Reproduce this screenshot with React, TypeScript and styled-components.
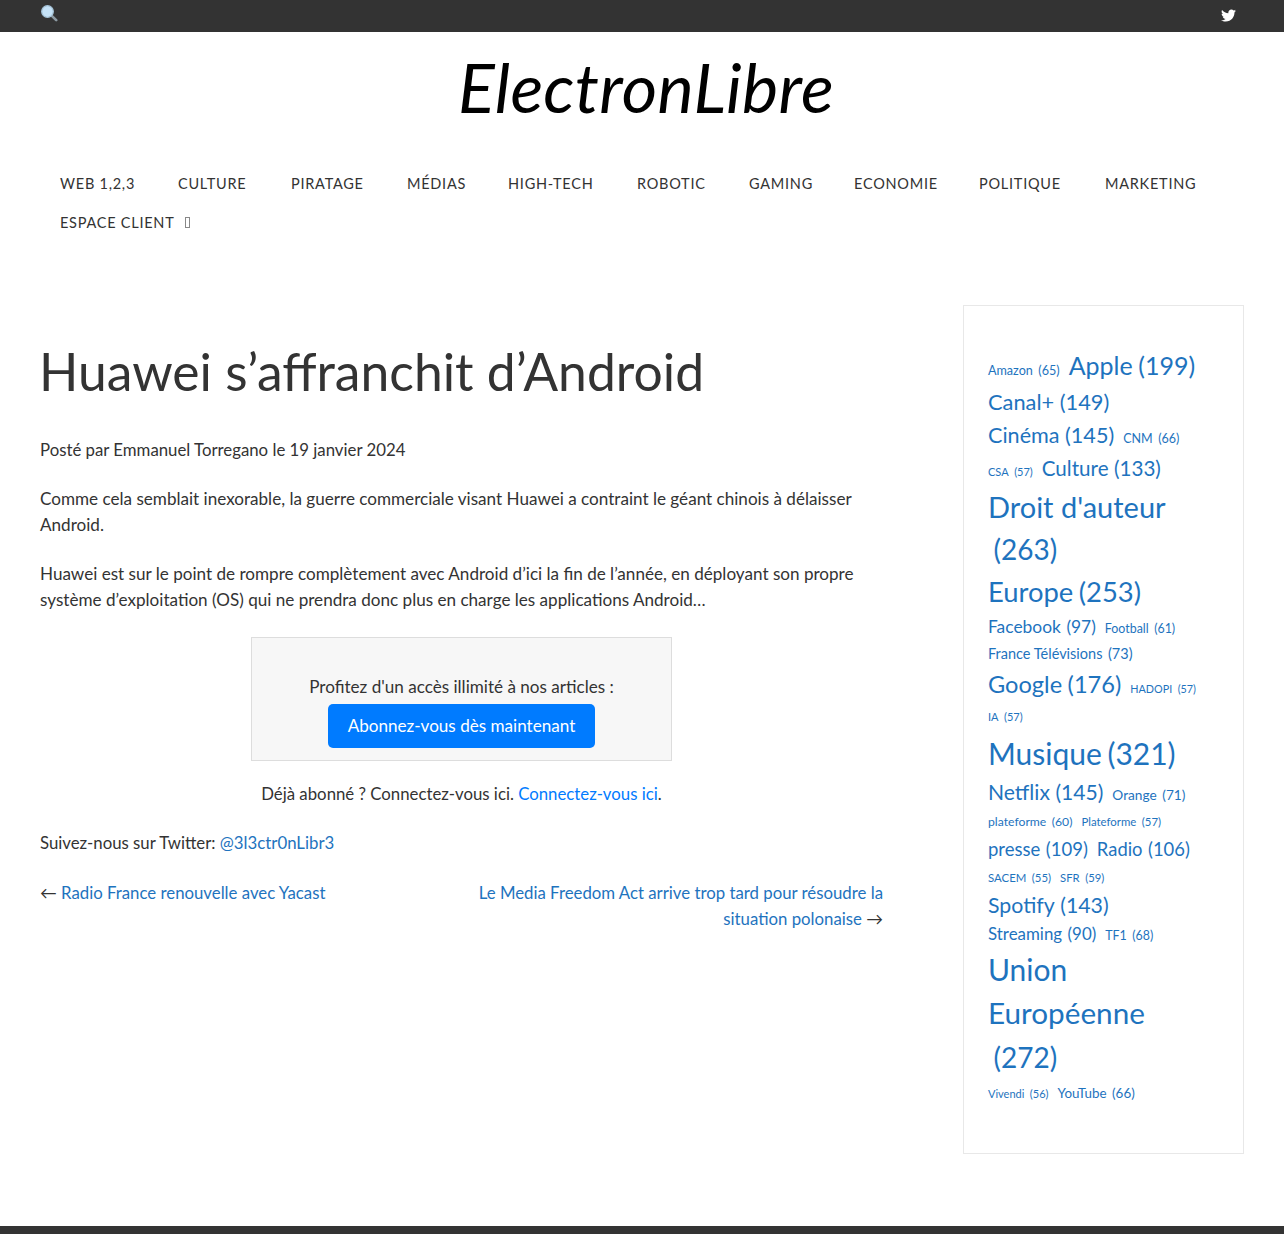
import React from "react";
import styled, { createGlobalStyle } from "styled-components";
import { FaTwitter } from "react-icons/fa";

const FONT = `"Lato", "Noto Sans", "Liberation Sans", sans-serif`;

const Global = createGlobalStyle`
  html, body { margin: 0; padding: 0; background: #fff; }
  body { font-family: ${FONT}; font-size: 17.1px; line-height: 26px; color: #333; }
  a { text-decoration: none; }
`;

const TopBar = styled.div`
  height: 32px;
  background: #333;
  padding: 0 40px 0 40px;
  display: flex;
  justify-content: space-between;
  align-items: flex-start;
`;
const SearchIcon = styled.svg`
  width: 18px;
  height: 18px;
  margin-top: 4px;
`;
const SocialLink = styled.a`
  color: #fff;
  display: flex;
  font-size: 15px;
  margin-top: 8px;
  margin-right: 8px;
`;
const Title = styled.h1`
  margin: 0;
  padding-top: 16px;
  height: 117px;
  box-sizing: border-box;
  padding-left: 8px;
  text-align: center;
  font-size: 68.4px;
  line-height: 78px;
  font-weight: 400;
  font-style: italic;
  color: #000;
  letter-spacing: 0.3px;
`;
const Nav = styled.nav`
  padding: 15px 40px 0;
  display: flex;
  flex-wrap: wrap;
  height: 123px;
  box-sizing: border-box;
  align-content: flex-start;
`;
const NavItem = styled.a<{ $w: number }>`
  width: ${(p) => p.$w}px;
  box-sizing: border-box;
  padding-left: 20px;
  height: 39px;
  line-height: 39px;
  font-size: 14.5px;
  letter-spacing: 0.75px;
  color: #333;
  white-space: nowrap;
  display: flex;
  align-items: center;
`;
const Tofu = styled.span`
  display: inline-block;
  width: 3px;
  height: 9px;
  border: 1px solid #888;
  margin-left: 10px;
`;
const Layout = styled.div`
  display: grid;
  grid-template-columns: 843px 281px;
  justify-content: space-between;
  padding: 0 40px;
  align-items: start;
`;
const Main = styled.main`
  padding-top: 67px;
`;
const Heading = styled.h2`
  margin: 0 0 34px -1px;
  font-size: 51.6px;
  line-height: 64px;
  font-weight: 400;
  color: #333;
`;
const Para = styled.p`
  margin: 0 0 23px;
  font-size: 16.8px;
`;
const LongPara = styled(Para)`
  font-size: 17.1px;
`;
const CenterPara = styled(Para)`
  text-align: center;
`;
const Paywall = styled.div`
  width: 421px;
  height: 124px;
  box-sizing: border-box;
  margin: 24px auto 20px;
  border: 1px solid #ddd;
  background: #f7f7f7;
  padding-top: 36px;
  display: flex;
  flex-direction: column;
  align-items: center;
`;
const Subscribe = styled.a`
  margin-top: 4px;
  width: 267px;
  height: 44px;
  line-height: 44px;
  text-align: center;
  background: #007bff;
  color: #fff;
  border-radius: 5px;
`;
const Link = styled.a`
  color: #1e73be;
`;
const LoginLink = styled.a`
  color: #007bff;
`;
const PostNav = styled.div`
  display: flex;
  justify-content: space-between;
  align-items: flex-start;
  margin-top: 24px;
  font-size: 16.8px;
`;
const NextLink = styled.div`
  width: 412px;
  text-align: right;
`;
const Side = styled.aside`
  margin-top: 33px;
  height: 849px;
  box-sizing: border-box;
  border: 1px solid #e8e8e8;
  padding: 41px 0 0 24px;
`;
const TagLine = styled.div<{ $h: number }>`
  height: ${(p) => p.$h}px;
  display: flex;
  align-items: baseline;
  gap: 9px;
  white-space: pre;
  line-height: ${(p) => p.$h}px;
`;
const Tag = styled.a<{ $s: number }>`
  color: #1e73be;
  font-size: ${(p) => p.$s}px;
`;
const Count = styled.span`
  margin-left: 5.5px;
`;
const Footer = styled.div`
  margin-top: 72px;
  height: 8px;
  background: #333;
`;

const tagLines: { h: number; tags: [string, string, number][] }[] = [
  { h: 37, tags: [["Amazon", "(65)", 12.6], ["Apple", "(199)", 25]] },
  { h: 35, tags: [["Canal+", "(149)", 21.8]] },
  { h: 33, tags: [["Cinéma", "(145)", 21.6], ["CNM", "(66)", 12.5]] },
  { h: 33, tags: [["CSA", "(57)", 11], ["Culture", "(133)", 20.6]] },
  { h: 43, tags: [["Droit d'auteur", "", 29]] },
  { h: 43, tags: [["", "(263)", 28]] },
  { h: 42, tags: [["Europe", "(253)", 27.4]] },
  { h: 27, tags: [["Facebook", "(97)", 17.4], ["Football", "(61)", 12.4]] },
  { h: 27, tags: [["France Télévisions", "(73)", 14.5]] },
  { h: 35, tags: [["Google", "(176)", 23.6], ["HADOPI", "(57)", 10.8]] },
  { h: 29, tags: [["IA", "(57)", 11]] },
  { h: 44, tags: [["Musique", "(321)", 30]] },
  { h: 34, tags: [["Netflix", "(145)", 21.1], ["Orange", "(71)", 13.7]] },
  { h: 26, tags: [["plateforme", "(60)", 12.2], ["Plateforme", "(57)", 11.4]] },
  { h: 29, tags: [["presse", "(109)", 18.5], ["Radio", "(106)", 18.4]] },
  { h: 27, tags: [["SACEM", "(55)", 11.4], ["SFR", "(59)", 11.3]] },
  { h: 29, tags: [["Spotify", "(143)", 21.3]] },
  { h: 27, tags: [["Streaming", "(90)", 16.9], ["TF1", "(68)", 12.4]] },
  { h: 44, tags: [["Union", "", 30]] },
  { h: 44, tags: [["Européenne", "", 29.7]] },
  { h: 45, tags: [["", "(272)", 28]] },
  { h: 27, tags: [["Vivendi", "(56)", 11], ["YouTube", "(66)", 13.4]] },
];

const navItems: [string, number][] = [
  ["WEB 1,2,3", 118], ["CULTURE", 113], ["PIRATAGE", 116], ["MÉDIAS", 101], ["HIGH-TECH", 129],
  ["ROBOTIC", 112], ["GAMING", 105], ["ECONOMIE", 125], ["POLITIQUE", 126], ["MARKETING", 130],
];

export default function App() {
  return (
    <>
      <Global />
      <TopBar>
        <SearchIcon viewBox="0 0 18 18">
          <path d="M11.8 11.8 L16.2 16.2" stroke="#8d9aa3" strokeWidth="2.6" strokeLinecap="round" />
          <circle cx="7.5" cy="7.5" r="5.8" fill="#c5e2f7" stroke="#a5c3d8" strokeWidth="1.3" />
        </SearchIcon>
        <SocialLink href="#"><FaTwitter /></SocialLink>
      </TopBar>
      <Title>ElectronLibre</Title>
      <Nav>
        {navItems.map(([n, w]) => (
          <NavItem key={n} href="#" $w={w}>{n}</NavItem>
        ))}
        <NavItem href="#" $w={200}>ESPACE CLIENT<Tofu /></NavItem>
      </Nav>
      <Layout>
        <Main>
          <Heading>Huawei s’affranchit d’Android</Heading>
          <Para>Posté par Emmanuel Torregano le 19 janvier 2024</Para>
          <LongPara>Comme cela semblait inexorable, la guerre commerciale visant Huawei a contraint le géant chinois à délaisser Android.</LongPara>
          <LongPara>Huawei est sur le point de rompre complètement avec Android d’ici la fin de l’année, en déployant son propre système d’exploitation (OS) qui ne prendra donc plus en charge les applications Android…</LongPara>
          <Paywall>
            Profitez d'un accès illimité à nos articles :
            <Subscribe href="#">Abonnez-vous dès maintenant</Subscribe>
          </Paywall>
          <CenterPara>Déjà abonné ? Connectez-vous ici. <LoginLink href="#">Connectez-vous ici</LoginLink>.</CenterPara>
          <Para>Suivez-nous sur Twitter: <Link href="#">@3l3ctr0nLibr3</Link></Para>
          <PostNav>
            <div>← <Link href="#">Radio France renouvelle avec Yacast</Link></div>
            <NextLink><Link href="#">Le Media Freedom Act arrive trop tard pour résoudre la situation polonaise</Link> →</NextLink>
          </PostNav>
        </Main>
        <Side>
          {tagLines.map((l, i) => (
            <TagLine key={i} $h={l.h}>
              {l.tags.map(([t, c, s]) => (
                <Tag key={t + c} href="#" $s={s}>{t}{c && <Count>{c}</Count>}</Tag>
              ))}
            </TagLine>
          ))}
        </Side>
      </Layout>
      <Footer />
    </>
  );
}
